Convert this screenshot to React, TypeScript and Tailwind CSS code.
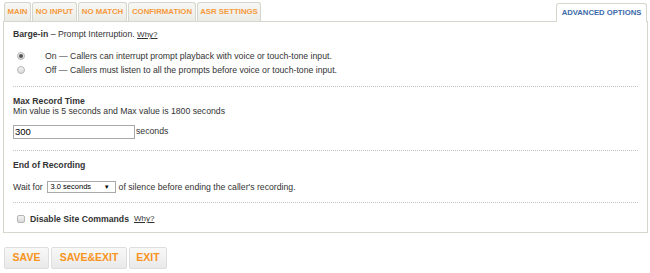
import React from 'react';

const tabs = [
  { label: 'MAIN', w: 'w-[27px]' },
  { label: 'NO INPUT', w: 'w-[45px]' },
  { label: 'NO MATCH', w: 'w-[49px]' },
  { label: 'CONFIRMATION', w: 'w-[68px]' },
  { label: 'ASR SETTINGS', w: 'w-[64px]' },
];

const Radio = ({ checked }: { checked?: boolean }) => (
  <span className="flex h-[8px] w-[8px] items-center justify-center rounded-full border border-[#b5b5b5] bg-gradient-to-b from-[#f4f4f4] to-[#d8d8d8]">
    {checked && <span className="h-[4px] w-[4px] rounded-full bg-[#555]" />}
  </span>
);

const Divider = () => <div className="border-t border-dotted border-[#c4c4c4]" />;

export default function App() {
  return (
    <div className="h-[273px] w-[650px] bg-white font-['Liberation_Sans',Arial,sans-serif] text-[8.7px] text-[#333]">
      <div className="pl-[3px] pr-[2px] pt-[2px]">
        <div className="flex h-[19px] items-end">
          <div className="flex gap-[1px] pl-[1px]">
            {tabs.map((t) => (
              <div
                key={t.label}
                className={`${t.w} flex h-[19px] items-center justify-center rounded-t-[3px] border border-b-0 border-[#d6d6cc] bg-gradient-to-b from-[#f7f7f5] to-[#ebebe6] text-[7.8px] font-bold text-[#f59a3c]`}
              >
                {t.label}
              </div>
            ))}
          </div>
          <div className="flex-1" />
          <div className="relative top-[1px] mr-[1px] flex h-[19px] w-[91px] items-center justify-center rounded-t-[3px] border border-b-0 border-[#d6d6cc] bg-white text-[7.7px] font-bold text-[#3b6aa8]">
            ADVANCED OPTIONS
          </div>
        </div>
        <div className="h-[212px] border border-[#d6d6cc] bg-white px-[9px]">
          <div className="mt-[7px] leading-[10px]">
            <span className="font-bold">Barge-in</span> – Prompt Interruption.{' '}
            <span className="text-[8px] underline">Why?</span>
          </div>
          <div className="mt-[11px] flex flex-col gap-[4px] pl-[4px]">
            <div className="flex items-center leading-[10px]">
              <Radio checked />
              <span className="ml-[20px]">On — Callers can interrupt prompt playback with voice or touch-tone input.</span>
            </div>
            <div className="flex items-center leading-[10px]">
              <Radio />
              <span className="ml-[20px]">Off — Callers must listen to all the prompts before voice or touch-tone input.</span>
            </div>
          </div>
          <div className="mt-[11px]">
            <Divider />
          </div>
          <div className="mt-[9px] font-bold leading-[10px]">Max Record Time</div>
          <div className="leading-[10px]">Min value is 5 seconds and Max value is 1800 seconds</div>
          <div className="mt-[9px] flex items-center">
            <div className="flex h-[14px] w-[122px] items-center border border-[#a9a9a9] px-[1px] text-[9.5px] text-black">
              300
            </div>
            <span className="ml-[1px]">seconds</span>
          </div>
          <div className="mt-[11px]">
            <Divider />
          </div>
          <div className="mt-[9px] font-bold leading-[10px]">End of Recording</div>
          <div className="mt-[11px] flex items-center leading-[10px]">
            <span>Wait for</span>
            <div className="ml-[4px] flex h-[12px] w-[69px] items-center justify-between border border-[#a9a9a9] bg-white pl-[3px] pr-[5px] text-[7.5px] text-black">
              <span>3.0 seconds</span>
              <span className="text-[6px]">▼</span>
            </div>
            <span className="ml-[3px]">of silence before ending the caller's recording.</span>
          </div>
          <div className="mt-[9px]">
            <Divider />
          </div>
          <div className="mt-[11px] flex items-center pl-[4px] leading-[10px]">
            <span className="h-[8px] w-[8px] rounded-[2px] border border-[#b5b5b5] bg-gradient-to-b from-[#f4f4f4] to-[#d8d8d8]" />
            <span className="ml-[5px] text-[8.7px] font-bold">Disable Site Commands</span>
            <span className="ml-[5px] text-[8px] underline">Why?</span>
          </div>
        </div>
      </div>
      <div className="mt-[14px] flex gap-[2px] pl-[4px]">
        {[
          { label: 'SAVE', w: 'w-[45px]' },
          { label: 'SAVE&EXIT', w: 'w-[76px]' },
          { label: 'EXIT', w: 'w-[38px]' },
        ].map((b) => (
          <div
            key={b.label}
            className={`${b.w} flex h-[22px] items-center justify-center rounded-[2px] border border-[#dedede] bg-gradient-to-b from-[#f8f8f8] to-[#e9e9e9] text-[10.5px] font-bold text-[#f7941d]`}
          >
            {b.label}
          </div>
        ))}
      </div>
    </div>
  );
}
